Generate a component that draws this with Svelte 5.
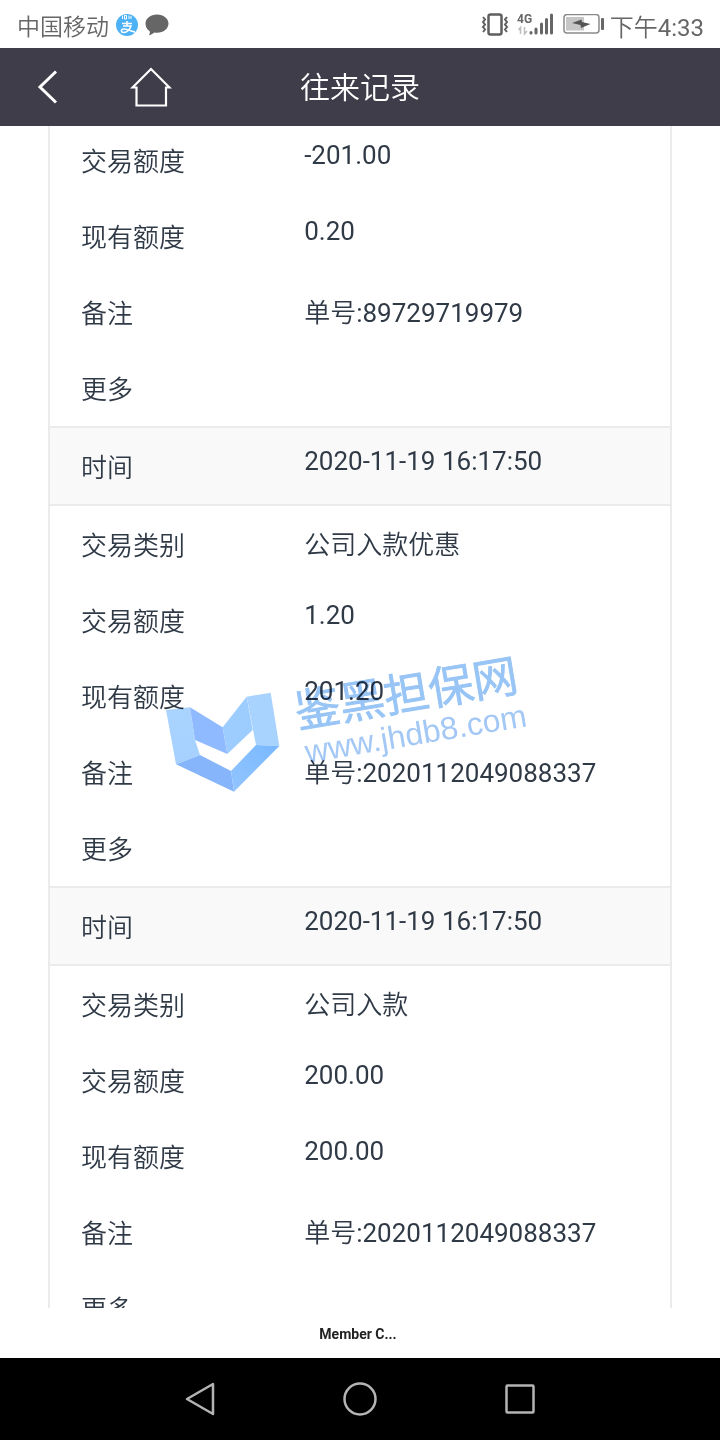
<script lang="ts">
  type Row = { label: string; value: string }
  type Entry = { time?: string; rows: Row[] }

  const entries: Entry[] = [
    {
      rows: [
        { label: '交易额度', value: '-201.00' },
        { label: '现有额度', value: '0.20' },
        { label: '备注', value: '单号:89729719979' },
        { label: '更多', value: '' },
      ],
    },
    {
      time: '2020-11-19 16:17:50',
      rows: [
        { label: '交易类别', value: '公司入款优惠' },
        { label: '交易额度', value: '1.20' },
        { label: '现有额度', value: '201.20' },
        { label: '备注', value: '单号:2020112049088337' },
        { label: '更多', value: '' },
      ],
    },
    {
      time: '2020-11-19 16:17:50',
      rows: [
        { label: '交易类别', value: '公司入款' },
        { label: '交易额度', value: '200.00' },
        { label: '现有额度', value: '200.00' },
        { label: '备注', value: '单号:2020112049088337' },
        { label: '更多', value: '' },
      ],
    },
  ]
</script>

<div class="screen">
  <div class="status">
    <span class="carrier">中国移动</span>
    <svg width="22" height="22" viewBox="0 0 22 22" fill="none">
      <circle cx="11" cy="11" r="11" fill="#4db1f5"/>
      <path d="M6.500 1.500v3.500M8.500 1.500h2v3.500h-2zM13 1.500v3.500M15 2v3" stroke="#fff" stroke-width="1"/>
      <path d="M6 9.500h10M11 7v5M7 12h8c-1 3-4 6.500-7 6.500-3.500 0-3.500-3.500 0-3.500 4 0 7 2.500 11 3" stroke="#fff" stroke-width="1.500"/>
    </svg>
    <svg width="24" height="22" viewBox="0 0 24 22">
      <path d="M12 0.500c6.500 0 11.500 4 11.500 9s-5 9.300-11.500 9.300c-1 0-2-.1-2.800-.3-1.500 1.500-3.500 2.500-5.200 2.700.8-1.200 1-2.500.7-4C2 15.500.5 12.700.5 9.500c0-5 5-9 11.500-9z" fill="#666"/>
    </svg>

    <div class="right">
      <div class="indicators">
        <svg width="28" height="24" viewBox="0 0 28 24" fill="none" stroke="#5f5f5f">
          <rect x="7.500" y="1.500" width="13" height="20" rx="2" stroke-width="2.500"/>
          <path d="M2 4l2 2.500-2 2.500 2 2.500-2 2.500 2 2.500-2 2.500M26 4l-2 2.500 2 2.500-2 2.500 2 2.500-2 2.500 2 2.500" stroke-width="2"/>
        </svg>
        <svg width="38" height="24" viewBox="0 0 38 24">
          <text x="0" y="10" class="net">4G</text>
          <path d="M3.500 21v-6.500l-2 2.500M7.500 14v7l2.500-3" fill="none" stroke="#bdbdbd" stroke-width="1.500"/>
          <path d="M14 19.500v.5M19 16v4M24.500 11v9M29.500 6.500v13.500M34.500 2v18" stroke="#666" stroke-width="3" stroke-linecap="round"/>
        </svg>
        <svg width="42" height="22" viewBox="0 0 42 22">
          <rect x="1" y=".5" width="35" height="18.500" rx="3" fill="none" stroke="#8a8a8a" stroke-width="1.500"/>
          <rect x="3" y="3" width="18" height="13.500" fill="#c6c6c6"/>
          <path d="M9 9l9.500-3.500.5 2.500 8.500 2-9.500 4-.5-3z" fill="#555"/>
          <rect x="38" y="4" width="3" height="12" rx="1" fill="#666"/>
        </svg>
      </div>
      <span class="clock">下午4:33</span>
    </div>
  </div>

  <header class="bar">
    <button class="icon-btn" aria-label="返回">
      <svg width="24" height="36" viewBox="0 0 24 36" fill="none">
        <path d="M20 2.500L4 18l16 15.500" stroke="#fff" stroke-width="3"/>
      </svg>
    </button>
    <button class="icon-btn" aria-label="首页">
      <svg width="42" height="42" viewBox="0 0 42 42" fill="none">
        <path d="M6.500 21.500H2.500L21 3l18.500 18.500H36V39.500H6.500z" stroke="#fff" stroke-width="2.200"/>
      </svg>
    </button>
    <h1>往来记录</h1>
  </header>

  <main class="content">
    <table class="records">
      {#each entries as entry}
        <tbody>
          {#if entry.time}
            <tr class="head">
              <th scope="row">时间</th>
              <td>{entry.time}</td>
            </tr>
          {/if}
          {#each entry.rows as row}
            <tr>
              <th scope="row">{row.label}</th>
              <td>{row.value}</td>
            </tr>
          {/each}
        </tbody>
      {/each}
    </table>
  </main>

  <footer class="member">Member C...</footer>

  <nav class="keys">
    <button aria-label="Back">
      <svg width="34" height="36" viewBox="0 0 34 36" fill="none">
        <path d="M30 3v30L4 18z" stroke="#b4b4b4" stroke-width="2.500" stroke-linejoin="round"/>
      </svg>
    </button>
    <button aria-label="Home">
      <svg width="36" height="36" viewBox="0 0 36 36" fill="none">
        <circle cx="18" cy="18" r="15.500" stroke="#b4b4b4" stroke-width="2.500"/>
      </svg>
    </button>
    <button aria-label="Recent">
      <svg width="34" height="34" viewBox="0 0 34 34" fill="none">
        <rect x="3.500" y="3.500" width="27" height="27" rx="1" stroke="#b4b4b4" stroke-width="2.500"/>
      </svg>
    </button>
  </nav>

  <svg class="watermark" width="390" height="160" viewBox="165 640 390 160">
    <defs>
      <linearGradient id="left" x1="0" y1="0" x2="0" y2="1">
        <stop offset="0" stop-color="#a9d4ff"/>
        <stop offset="1" stop-color="#a6d0ff"/>
      </linearGradient>
      <linearGradient id="base" x1="0" y1="1" x2="1" y2="0">
        <stop offset="0" stop-color="#93c5ff"/>
        <stop offset="1" stop-color="#78b8ff"/>
      </linearGradient>
    </defs>
    <g transform="translate(150 640) scale(.33333)">
      <path d="M48 210L120 202L135 300L150 345L78 373z" fill="url(#left)"/>
      <path d="M120 202L218 262L232 342L135 300z" fill="#8fbaff"/>
      <path d="M218 262L290 170L308 270L232 342z" fill="#9dccff"/>
      <path d="M290 170L362 158L388 318L318 315z" fill="#a9d3ff"/>
      <path d="M78 373L150 345L243 393L252 455z" fill="#86b5fb"/>
      <path d="M243 393L318 315L388 318L252 455z" fill="url(#base)"/>
    </g>
    <text class="brand" transform="translate(298 728) rotate(-9.500)">鉴黑担保网</text>
    <text class="url" transform="translate(307 763) rotate(-9.500)">www.jhdb8.com</text>
  </svg>
</div>

<style>
  :global(body) {
    margin: 0;
    background: #fff;
  }

  .screen {
    position: relative;
    display: flex;
    flex-direction: column;
    height: 100vh;
    overflow: hidden;
    font-family: Roboto, 'Noto Sans CJK SC DemiLight', 'Noto Sans CJK SC', sans-serif;
    color: #303a47;
  }

  button {
    display: flex;
    align-items: center;
    justify-content: center;
    padding: 0;
    border: none;
    background: none;
    cursor: pointer;
  }

  .status {
    display: flex;
    align-items: center;
    gap: 7px;
    box-sizing: border-box;
    height: 48px;
    padding: 2px 16px 0 17px;
    flex-shrink: 0;
    color: #666;
    font-size: 24px;
  }

  .carrier {
    font-size: 23px;
  }

  .right {
    display: flex;
    align-items: center;
    gap: 5px;
    margin-left: auto;
  }

  .indicators {
    display: flex;
    align-items: center;
    gap: 8px;
  }

  .net {
    font-size: 12px;
    font-weight: 700;
    fill: #666;
  }

  .bar {
    position: relative;
    display: flex;
    align-items: center;
    gap: 70px;
    height: 78px;
    padding: 0 36px;
    flex-shrink: 0;
    background: #3e3d49;
    color: #fff;
  }

  .icon-btn {
    z-index: 1;
  }

  /* title stays centred whatever sits on the left */
  h1 {
    position: absolute;
    inset: 0;
    margin: 0;
    font-size: 30px;
    font-weight: 400;
    line-height: 80px;
    text-align: center;
  }

  .content {
    flex: 1;
    min-height: 0;
    padding: 0 48px;
    overflow-y: auto;
    scrollbar-width: none;
  }

  .records {
    display: block;
    margin-top: -4px;
    border: 2px solid #ebebeb;
    border-top: none;
    font-size: 26px;
  }

  tbody {
    display: block;
  }

  tr {
    display: flex;
    align-items: flex-start;
    min-height: 76px;
    padding: 0 31px;
  }

  .head {
    border-top: 2px solid #ebebeb;
    border-bottom: 2px solid #ebebeb;
    background: #f9f9f9;
  }

  th,
  td {
    padding: 19px 0 0;
    text-align: left;
  }

  th {
    flex: 0 0 40%;
    font-weight: 350;
  }

  td {
    flex: 1;
    padding-top: 18px;
  }

  .member {
    height: 50px;
    padding-right: 4px;
    flex-shrink: 0;
    color: #222;
    font-size: 14px;
    font-weight: 700;
    line-height: 52px;
    text-align: center;
  }

  .keys {
    display: flex;
    align-items: center;
    justify-content: center;
    gap: 120px;
    height: 82px;
    flex-shrink: 0;
    background: #000;
  }

  .keys button {
    width: 40px;
    height: 40px;
  }

  .watermark {
    position: absolute;
    top: 50%;
    left: 50%;
    transform: translate(-50%, -50%);
    mix-blend-mode: multiply;
    pointer-events: none;
  }

  .brand {
    font-size: 45px;
    font-weight: 400;
    fill: #98c5f5;
    stroke: #98c5f5;
  }

  .url {
    font-family: 'Liberation Sans', sans-serif;
    font-size: 32px;
    fill: #a3c8f5;
  }
</style>
